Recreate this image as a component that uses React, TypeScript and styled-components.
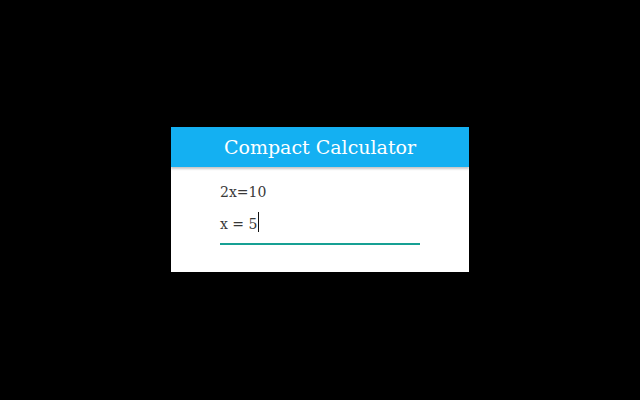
import React from 'react'
import styled, { createGlobalStyle } from 'styled-components'

const GlobalStyle = createGlobalStyle`
  html, body {
    margin: 0;
    padding: 0;
    background: #000;
  }
  #root {
    width: 640px;
    height: 400px;
  }
`

const Screen = styled.div`
  width: 640px;
  height: 400px;
  display: flex;
  align-items: center;
  justify-content: center;
  background: #000;
`

const Card = styled.div`
  width: 298px;
  height: 145px;
  margin-top: -1px;
  background: #fff;
  display: flex;
  flex-direction: column;
`

const Header = styled.div`
  height: 40px;
  flex: none;
  background: #14b0f2;
  color: #fff;
  display: flex;
  align-items: center;
  justify-content: center;
  font-family: "DejaVu Serif", serif;
  font-size: 19px;
  box-shadow: 0 2px 2px rgba(0, 0, 0, 0.22);
  position: relative;
  z-index: 1;
`

const Body = styled.div`
  padding: 15px 0 0 49px;
  display: flex;
  flex-direction: column;
  font-family: "DejaVu Serif", serif;
  color: #383838;
`

const Question = styled.div`
  font-size: 14px;
  line-height: 20px;
`

const Field = styled.div`
  margin-top: 6px;
  width: 200px;
  height: 29px;
  padding-top: 6px;
  border-bottom: 2px solid #16a094;
  display: flex;
  align-items: flex-start;
  font-size: 14px;
  line-height: 20px;
`

const Caret = styled.span`
  display: inline-block;
  width: 1px;
  height: 20px;
  margin-top: -2px;
  background: #111;
  margin-left: 1px;
`

export default function App() {
  return (
    <>
      <GlobalStyle />
      <Screen>
        <Card>
          <Header>Compact Calculator</Header>
          <Body>
            <Question>2x=10</Question>
            <Field>
              x = 5<Caret />
            </Field>
          </Body>
        </Card>
      </Screen>
    </>
  )
}
